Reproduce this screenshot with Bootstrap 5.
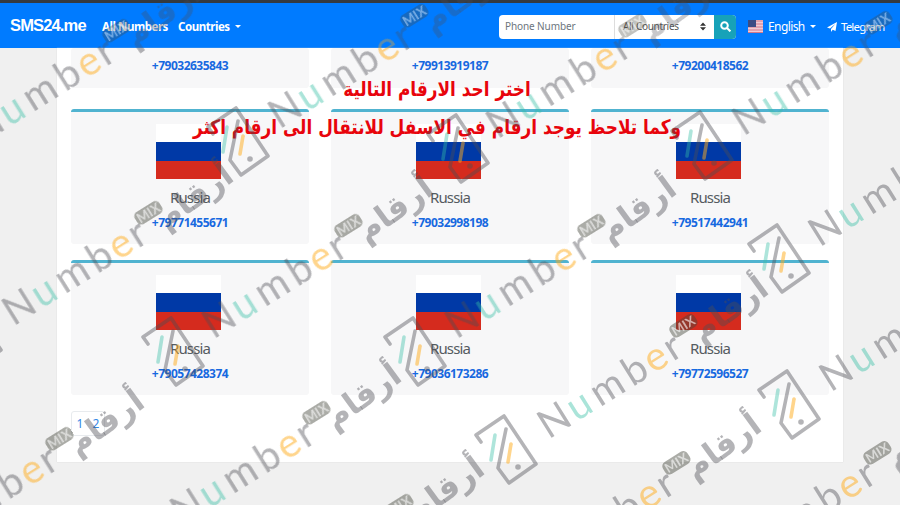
<!DOCTYPE html>
<html lang="en">
<head>
<meta charset="utf-8">
<title>SMS24.me</title>
<link href="https://cdn.jsdelivr.net/npm/bootstrap@5.3.0/dist/css/bootstrap.min.css" rel="stylesheet">
<style>
body{background:#f0f0f0;font-family:"Noto Sans","Open Sans",sans-serif;font-size:12px;height:505px;overflow:hidden}
.topbar{height:48px;background:#007bff;border-top:3px solid #343a40;padding:2px 0 0 10px;flex-wrap:nowrap}
.brand-name{font:700 16.5px "Liberation Sans",sans-serif;width:92px;letter-spacing:-.85px;margin-top:-2px}
.menu-link{font-weight:700;font-size:11.5px;letter-spacing:-.45px}
.menu-first{width:76px}
.caret{display:inline-block;border:3.5px solid transparent;border-top-color:currentColor;border-bottom:0;vertical-align:3px;margin-left:3px}
.finder{width:237px;height:24px;margin-left:auto;font-size:10px;letter-spacing:-.1px;color:#6c757d}
.find-phone{width:116px;border-right:1px solid #ddd;padding-left:6px}
.find-country{width:99px;padding:0 8px;color:#555;letter-spacing:-.3px}
.find-go{width:22px;background:#17a2b8}
.lang{margin-left:12px;width:79px;letter-spacing:-.6px}
.lang svg{margin-right:5px}
.tele{width:73px;letter-spacing:-.85px;font-size:11.5px}
.sheet{width:786px;height:414px;margin:0 auto;padding:0 14px;background:#fff;box-shadow:0 0 1px #ccc}
.tiles{display:grid;grid-template-columns:repeat(3,238px);column-gap:22px}
.tile{background:#f7f7f8;height:135px;margin-bottom:16px;border-top:3px solid #50b3d0;border-radius:3px;padding-top:12px}
.tile-cut{height:40px;margin-bottom:21px;border-top:0;padding-top:9px}
.flag{width:65px;height:55px;margin-left:85px;background:linear-gradient(#fff 0 18px,#0039a6 18px 36.5px,#d52b1e 36.5px)}
.country{font-size:15px;line-height:20px;margin-top:8px;color:#555b61;letter-spacing:-.9px}
.phone{font-weight:700;font-size:12px;line-height:18px;color:#1769e0;letter-spacing:-.5px}
.tile:not(.tile-cut) .phone{margin-top:7px}
.pager{width:34px;height:25px;border:1px solid #e8ebee;border-radius:3px;color:#3387e5}
.note{top:70px;left:0;width:874px;color:#e8040c;font:700 20px/38px "DejaVu Sans",sans-serif;text-align:center;white-space:nowrap;transform:scaleX(.845)}
.marks{left:0;top:0;z-index:5;pointer-events:none}
</style>
<script src="https://cdn.jsdelivr.net/npm/bootstrap@5.3.0/dist/js/bootstrap.bundle.min.js"></script>
</head>
<body class="position-relative">
<nav class="topbar d-flex align-items-center text-white">
  <div class="brand-name">SMS24.me</div>
  <div class="menu-link menu-first">All Numbers</div>
  <div class="menu-link">Countries <i class="caret"></i></div>
  <div class="finder d-flex bg-white rounded-1 overflow-hidden">
    <div class="find-phone d-flex align-items-center">Phone Number</div>
    <div class="find-country d-flex align-items-center justify-content-between">All Countries
      <svg width="6" height="9" viewBox="0 0 6 9"><path d="M0 3.8 3 .5l3 3.3zM0 5.2h6L3 8.5z" fill="#333"/></svg></div>
    <div class="find-go d-flex align-items-center justify-content-center"><svg width="11" height="11" viewBox="0 0 11 11" fill="none" stroke="#fff" stroke-width="2"><circle cx="4.5" cy="4.5" r="3.3"/><path d="m7 7 3.4 3.4"/></svg></div>
  </div>
  <div class="lang d-flex align-items-center">
    <svg width="15" height="13" viewBox="0 0 15 13"><path fill="#f0cbd2" d="M0 0h15v13H0z"/><path stroke="#d2788b" stroke-width="1.2" d="M0 1h15M0 4h15M0 7h15M0 10h15M0 12.5h15"/><path fill="#3b4c84" d="M0 0h8v7H0z"/></svg>
    <span>English <i class="caret"></i></span></div>
  <div class="tele d-flex align-items-center"><svg class="me-1" width="10" height="10" viewBox="0 0 10 10"><path fill="#fff" d="M10 0 8.5 9 5.7 7.8 4 10V7L8.500 1.800 3 6.500 0 5.400z"/></svg>Telegram</div>
</nav>
<main class="sheet">
  <div class="tiles text-center">
    <div class="tile tile-cut"><div class="phone">+79032635843</div></div>
    <div class="tile tile-cut"><div class="phone">+79913919187</div></div>
    <div class="tile tile-cut"><div class="phone">+79200418562</div></div>
    <div class="tile"><div class="flag"></div><div class="country">Russia</div><div class="phone">+79771455671</div></div>
    <div class="tile"><div class="flag"></div><div class="country">Russia</div><div class="phone">+79032998198</div></div>
    <div class="tile"><div class="flag"></div><div class="country">Russia</div><div class="phone">+79517442941</div></div>
    <div class="tile"><div class="flag"></div><div class="country">Russia</div><div class="phone">+79057428374</div></div>
    <div class="tile"><div class="flag"></div><div class="country">Russia</div><div class="phone">+79036173286</div></div>
    <div class="tile"><div class="flag"></div><div class="country">Russia</div><div class="phone">+79772596527</div></div>
  </div>
  <div class="pager d-flex align-items-center justify-content-around"><span>1</span><span>2</span></div>
</main>
<div class="note position-absolute" dir="rtl" lang="ar"><div>اختر احد الارقام التالية</div><div>وكما تلاحظ يوجد ارقام في الاسفل للانتقال الى ارقام اكثر</div></div>
<svg class="marks position-absolute" width="900" height="505" viewBox="0 0 900 505">
  <defs>
    <!-- origin: centre of the letter e -->
    <g id="word">
      <g transform="rotate(-32)">
        <text y="10" font-family="Lato,sans-serif" font-size="40" fill="#4c4c54" fill-opacity=".42" text-anchor="middle"><tspan x="-119">N</tspan><tspan x="-90" fill="#35bfa5">u</tspan><tspan x="-57">m</tspan><tspan x="-24">b</tspan><tspan x="0" fill="#ffab1a" fill-opacity=".5">e</tspan><tspan x="20">r</tspan></text>
        <rect x="26" y="-22" width="29" height="14" rx="5" fill="#44463c" fill-opacity=".45"/>
        <text x="40.500" y="-10.500" font-family="Lato,sans-serif" font-weight="700" font-size="13" fill="#fff" fill-opacity=".6" text-anchor="middle">MIX</text>
      </g>
      <g transform="translate(73 -50) rotate(-36)">
        <text x="0" y="10" font-family="DejaVu Sans,sans-serif" font-weight="700" font-size="32" fill="#4c4c54" fill-opacity=".42" text-anchor="middle" textLength="86" lengthAdjust="spacingAndGlyphs">أرقام</text>
      </g>
    </g>
    <!-- origin: top corner of the handset -->
    <g id="handset" fill="none" stroke-width="3.600" stroke-linejoin="round" stroke-linecap="round">
      <path d="M-23 27-28 20 0 1 32 49 5 68-6 53 2 14" stroke="#4c4c54" stroke-opacity=".42"/>
      <path d="m-9 20-4 25" stroke="#35bfa5" stroke-opacity=".4"/>
      <path d="m7 29-3 18" stroke="#ffab1a" stroke-opacity=".5"/>
      <circle cx="14" cy="52" r="2.800" fill="#4c4c54" fill-opacity=".42" stroke="none"/>
    </g>
    <linearGradient id="fade" x1="0" y1="0" x2="0" y2="505" gradientUnits="userSpaceOnUse"><stop offset=".095" stop-color="#bbb"/><stop offset=".095" stop-color="#fff"/></linearGradient>
    <mask id="soft" maskUnits="userSpaceOnUse" x="0" y="0" width="900" height="505"><path fill="url(#fade)" d="M0 0h900v505H0z"/></mask>
  </defs>
  <g mask="url(#soft)">
    <use href="#word" x="90" y="65"/><use href="#word" x="388" y="50"/><use href="#word" x="606" y="60"/><use href="#word" x="852" y="57"/>
    <use href="#word" x="122" y="247"/><use href="#word" x="322" y="260"/><use href="#word" x="565" y="260"/><use href="#word" x="928" y="168"/>
    <use href="#word" x="33" y="473"/><use href="#word" x="290" y="447"/><use href="#word" x="657" y="360"/><use href="#word" x="939" y="313"/>
    <use href="#word" x="650" y="497"/><use href="#word" x="851" y="487"/><use href="#word" x="373" y="540"/>
    <use href="#handset" x="236" y="107"/><use href="#handset" x="456" y="114"/><use href="#handset" x="700" y="111"/><use href="#handset" x="777" y="224"/>
    <use href="#handset" x="171" y="317"/><use href="#handset" x="413" y="317"/><use href="#handset" x="504" y="415"/><use href="#handset" x="787" y="370"/>
    <use href="#handset" x="-31" y="301"/>
  </g>
</svg>
</body>
</html>
